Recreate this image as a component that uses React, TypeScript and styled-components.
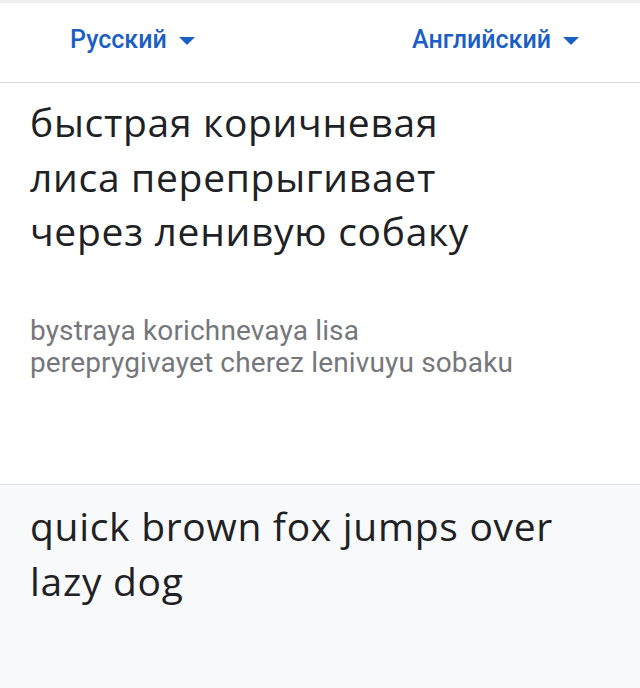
import React from 'react'
import styled, { createGlobalStyle } from 'styled-components'

//#region styled components
const GlobalStyle = createGlobalStyle`
  html, body {
    margin: 0;
    padding: 0;
    background: #ffffff;
  }
  * {
    box-sizing: border-box;
  }
`

const StyledPage = styled('div')`
  display: flex;
  flex-direction: column;
  width: 640px;
  height: 688px;
  overflow: hidden;
  background-color: #ffffff;
`

const StyledLangBar = styled('div')`
  display: flex;
  flex-direction: row;
  align-items: center;
  justify-content: space-between;
  height: 83px;
  padding: 0 61px 6px 70px;
  border-top: 3px solid #ededed;
  border-bottom: 1px solid #dcdcdc;
`

const StyledLangButton = styled('div')`
  display: flex;
  align-items: center;
  gap: 12px;
  color: #1b5ec6;
  font-family: Roboto, 'Liberation Sans', sans-serif;
  font-weight: 500;
  font-size: 25px;
  cursor: pointer;
`

const StyledCaret = styled('span')`
  width: 0;
  height: 0;
  margin-top: 3px;
  border-left: 8px solid transparent;
  border-right: 8px solid transparent;
  border-top: 8px solid #1b5ec6;
`

const StyledSource = styled('div')`
  height: 401px;
  padding: 12px 20px 0 30px;
`

const StyledBigText = styled('div')`
  font-family: 'Open Sans', 'Noto Sans', sans-serif;
  font-size: 39px;
  letter-spacing: 0.7px;
  line-height: 54.5px;
  color: #202124;
`

const StyledTranslit = styled('div')`
  margin-top: 56px;
  font-family: Roboto, 'Liberation Sans', sans-serif;
  font-size: 28px;
  letter-spacing: 0.15px;
  line-height: 32px;
  color: #75777b;
`

const StyledTarget = styled('div')`
  flex: 1;
  background-color: #f8f9fa;
  border-top: 1px solid #dedfe1;
  padding: 14px 20px 0 30px;
`
//#endregion

const App = () => {
  return (
    <StyledPage>
      <GlobalStyle />
      <StyledLangBar>
        <StyledLangButton>
          Русский
          <StyledCaret />
        </StyledLangButton>
        <StyledLangButton>
          Английский
          <StyledCaret />
        </StyledLangButton>
      </StyledLangBar>
      <StyledSource>
        <StyledBigText>
          быстрая коричневая
          <br />
          лиса перепрыгивает
          <br />
          через ленивую собаку
        </StyledBigText>
        <StyledTranslit>
          bystraya korichnevaya lisa
          <br />
          pereprygivayet cherez lenivuyu sobaku
        </StyledTranslit>
      </StyledSource>
      <StyledTarget>
        <StyledBigText>
          quick brown fox jumps over
          <br />
          lazy dog
        </StyledBigText>
      </StyledTarget>
    </StyledPage>
  )
}

export default App
